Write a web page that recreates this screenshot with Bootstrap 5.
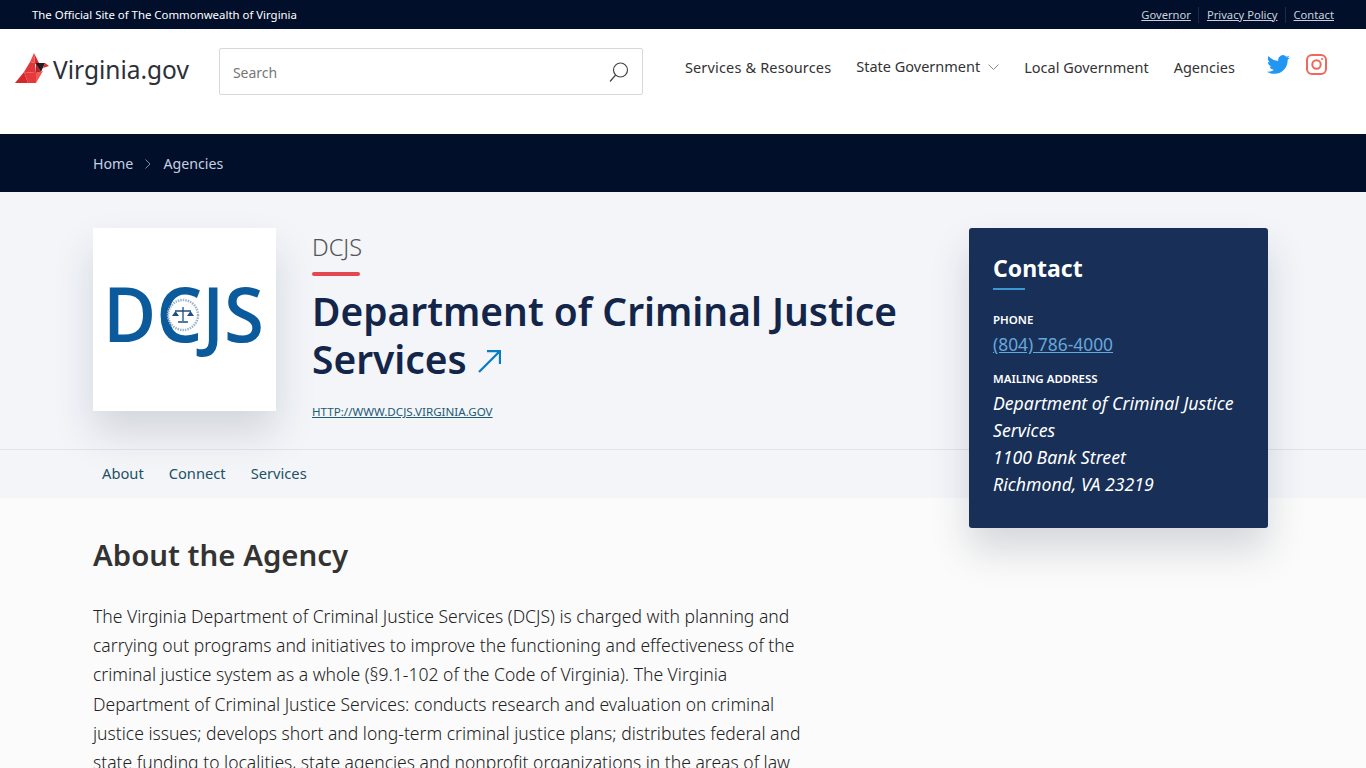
<!DOCTYPE html>
<html lang="en">
<head>
    <meta charset="UTF-8">
    <meta name="viewport" content="width=device-width, initial-scale=1.0">
    <title>Department of Criminal Justice Services</title>
    <link href="https://cdn.jsdelivr.net/npm/bootstrap@5.3.0/dist/css/bootstrap.min.css" rel="stylesheet">
    <style>
        body { font-family: "Noto Sans", "Open Sans", sans-serif; background: #fbfbfb; color: #333; overflow-x: hidden; }
        a { color: inherit; }

        /* top strip */
        .gov-strip { height: 29px; background: #020f2a; color: #fff; font-size: 11.4px; padding: 0 32px; }
        .gov-strip a { color: #c9d2de; }
        .gov-links { padding-top: 1px; }
        .gov-links > a { font-size: 11.2px; text-decoration: underline; }
        .gov-links > a + a { border-left: 1px solid #1d2a44; margin-left: 7px; padding-left: 8px; }

        /* header */
        .site-head { height: 105px; background: #fff; padding: 19px 32px 0 14px; }
        .brand-mark { width: 36px; height: 32px; margin-top: -2px; }
        .brand-name { font-size: 24.5px; line-height: 32px; color: #2c3038; margin-left: 3px; padding-top: 2px; }
        .search-box { width: 424px; height: 47px; margin-left: 30px; border: 1px solid #d8d8d8; border-radius: 2px; padding: 0 12px 0 13px; }
        .search-box input { border: 0; outline: 0; flex: 1; font-size: 14px; color: #555; padding: 2px 0 0; background: none; }
        .search-box input::placeholder { color: #777; }
        .main-links { margin-left: 42px; font-size: 14.5px; color: #333; margin-top: 9px; }
        .main-links a { text-decoration: none; margin-right: 25px; }
        .main-links .wide-link { letter-spacing: .16px; }
        .main-links .raised-link { margin-top: -2px; }
        .social-links { margin-left: 7px; gap: 16px; margin-top: 5px; }

        /* breadcrumb */
        .crumb-bar { height: 58px; background: #020f2a; padding: 2px 0 0 93px; font-size: 14.2px; color: #c5d0e2; }
        .crumb-bar a { text-decoration: none; }
        .crumb-bar .crumb-sep { width: 30px; }

        /* hero */
        .agency-hero { height: 258px; background: #f3f5f9; border-bottom: 1px solid #e2e4e8; padding: 36px 0 0 93px; }
        .agency-logo { width: 183px; height: 183px; background: #fff; box-shadow: 0 22px 38px rgba(30,40,60,.15); flex-shrink: 0; }
        .agency-info { margin-left: 36px; width: 620px; }
        .agency-abbr { font-size: 23.5px; font-weight: 300; line-height: 30px; color: #555; margin: 4px 0 0; }
        .red-rule { width: 48px; height: 4px; background: #e3474f; border-radius: 2px; margin: 10px 0 11px; }
        .agency-title { font-size: 38.9px; line-height: 48px; font-weight: 600; color: #13264a; margin: 0; }
        .agency-title svg { vertical-align: 1px; margin-left: 1px; }
        .agency-url { display: block; margin-top: 20px; font-size: 11.6px; color: #1d5a73; }

        /* section tabs */
        .section-tabs { height: 48px; background: #f3f5f9; padding: 0 0 2px 102px; gap: 25px; font-size: 14.7px; color: #235165; }
        .section-tabs a { text-decoration: none; }

        /* contact card */
        .page-wrap { position: relative; }
        .contact-panel { position: absolute; left: 969px; top: 228px; width: 299px; height: 300px; padding: 24px; background: #182f57; color: #fff; border-radius: 3px; box-shadow: 0 22px 38px rgba(30,40,60,.17); }
        .contact-panel h2 { font-size: 23px; font-weight: 700; line-height: 34px; margin: -1px 0 1px; }
        .blue-rule { width: 32px; height: 2px; background: #3c97d3; margin: 3px 0 22px; }
        .contact-label { font-size: 11.5px; font-weight: 600; text-transform: uppercase; line-height: 16px; margin-bottom: 3px; }
        .contact-phone { font-size: 17.4px; line-height: 27px; color: #66a8dc; display: block; margin-bottom: 13px; }
        .contact-panel address { font-size: 17.7px; line-height: 27px; font-style: italic; margin: 0; }

        /* about */
        .about-text { padding: 37px 0 0 93px; width: 830px; }
        .about-text h2 { font-size: 29.4px; font-weight: 600; line-height: 40px; color: #333; margin: 0 0 27px; }
        .about-text p { font-size: 17.55px; font-weight: 300; line-height: 29.2px; color: #222; margin: 0; white-space: nowrap; }
    </style>
</head>
<body>
<div class="page-wrap">
    <!-- top strip -->
    <div class="gov-strip d-flex justify-content-between align-items-center">
        <span>The Official Site of The Commonwealth of Virginia</span>
        <span class="gov-links d-flex"><a href="#">Governor</a><a href="#">Privacy Policy</a><a href="#">Contact</a></span>
    </div>

    <!-- header -->
    <header class="site-head d-flex align-items-start">
        <a href="#" class="d-flex align-items-center text-decoration-none mt-1">
            <svg class="brand-mark" viewBox="14 52 36 32">
                <polygon points="34,53 39,63 35,63" fill="#d9272e"/>
                <polygon points="34,53 35,63 30,62" fill="#ee4b47"/>
                <polygon points="30,62 35,63 36,73 24,72" fill="#e0353a"/>
                <polygon points="35,63 45,63 41,72" fill="#231f20"/>
                <polygon points="45,63 49,66 43,68" fill="#d92f33"/>
                <polygon points="36,64 41,72 36,73" fill="#b92328"/>
                <polygon points="36,73 43,71 36,83" fill="#f05a52"/>
                <polygon points="24,72 36,73 36,83 28,83" fill="#e5393c"/>
                <polygon points="24,72 28,83 15,83" fill="#d4282d"/>
            </svg>
            <span class="brand-name">Virginia.gov</span>
        </a>
        <form class="search-box d-flex align-items-center">
            <input type="text" placeholder="Search">
            <svg width="22" height="22" viewBox="0 0 22 22" fill="none" stroke="#444" stroke-width="1.2"><circle cx="12.500" cy="9" r="7"/><path d="M7.600 14 2 20.500"/></svg>
        </form>
        <nav class="main-links d-flex align-items-center">
            <a href="#" class="wide-link">Services &amp; Resources</a>
            <a href="#" class="raised-link d-flex align-items-center gap-2">State Government
                <svg width="11" height="6" viewBox="0 0 11 6" fill="none" stroke="#888"><path d="M.5.5l5 5 5-5"/></svg></a>
            <a href="#">Local Government</a>
            <a href="#">Agencies</a>
        </nav>
        <div class="social-links d-flex align-items-center">
            <svg width="23" height="23" viewBox="0 0 24 24" fill="#2196f3"><path d="M23.953 4.57a10 10 0 01-2.825.775 4.958 4.958 0 002.163-2.723c-.951.555-2.005.959-3.127 1.184a4.92 4.92 0 00-8.384 4.482C7.69 8.095 4.067 6.13 1.64 3.162a4.822 4.822 0 00-.666 2.475c0 1.71.87 3.213 2.188 4.096a4.904 4.904 0 01-2.228-.616v.06a4.923 4.923 0 003.946 4.827 4.996 4.996 0 01-2.212.085 4.936 4.936 0 004.604 3.417 9.867 9.867 0 01-6.102 2.105c-.39 0-.779-.023-1.17-.067a13.995 13.995 0 007.557 2.209c9.053 0 13.998-7.496 13.998-13.985 0-.21 0-.42-.015-.63A9.935 9.935 0 0024 4.59z"/></svg>
            <svg width="21" height="21" viewBox="0 0 21 21" fill="none" stroke="#f0675c" stroke-width="2"><rect x="1" y="1" width="19" height="19" rx="5"/><circle cx="10.500" cy="10.500" r="4.200"/><circle cx="16" cy="5" r="1" fill="#f0675c" stroke="none"/></svg>
        </div>
    </header>

    <!-- breadcrumb -->
    <div class="crumb-bar d-flex align-items-center">
        <a href="#">Home</a>
        <span class="crumb-sep d-flex justify-content-center"><svg width="6" height="10" viewBox="0 0 6 10" fill="none" stroke="#7f8ca3"><path d="M.5.5 5 5 .5 9.500"/></svg></span>
        <a href="#">Agencies</a>
    </div>

    <!-- hero -->
    <section class="agency-hero d-flex align-items-start">
        <div class="agency-logo">
            <svg width="183" height="183" viewBox="0 0 183 183">
                <text x="10" y="114" textLength="161" lengthAdjust="spacingAndGlyphs" fill="#0b5a9c" font-family="'Open Sans', sans-serif" font-weight="600" font-size="76">DCJS</text>
                <circle cx="90" cy="87" r="15" fill="#fff" stroke="#9db4cb" stroke-width="2.500" stroke-dasharray="1.500 1"/>
                <path d="M82 83h16M90 79v14M85 94h10" stroke="#1d4f7f" stroke-width="1.300" fill="none"/>
                <path d="M79 88h7l-3.500-5zM94 88h7l-3.500-5z" fill="#1d4f7f"/>
            </svg>
        </div>
        <div class="agency-info">
            <p class="agency-abbr">DCJS</p>
            <div class="red-rule"></div>
            <h1 class="agency-title">Department of Criminal Justice Services
                <svg width="23" height="23" viewBox="0 0 23 23" fill="none" stroke="#0a7dc0" stroke-width="2.300"><path d="M1 22 22 1M9 1h13v13"/></svg>
            </h1>
            <a class="agency-url" href="#">HTTP://WWW.DCJS.VIRGINIA.GOV</a>
        </div>
    </section>

    <!-- section tabs -->
    <nav class="section-tabs d-flex align-items-center">
        <a href="#">About</a>
        <a href="#">Connect</a>
        <a href="#">Services</a>
    </nav>

    <!-- contact card -->
    <aside class="contact-panel">
        <h2>Contact</h2>
        <div class="blue-rule"></div>
        <div class="contact-label">Phone</div>
        <a class="contact-phone" href="#">(804) 786-4000</a>
        <div class="contact-label">Mailing Address</div>
        <address>Department of Criminal Justice Services<br>1100 Bank Street<br>Richmond, VA 23219</address>
    </aside>

    <!-- about -->
    <main class="about-text">
        <h2>About the Agency</h2>
        <p>The Virginia Department of Criminal Justice Services (DCJS) is charged with planning and<br>
        carrying out programs and initiatives to improve the functioning and effectiveness of the<br>
        criminal justice system as a whole (§9.1-102 of the Code of Virginia). The Virginia<br>
        Department of Criminal Justice Services: conducts research and evaluation on criminal<br>
        justice issues; develops short and long-term criminal justice plans; distributes federal and<br>
        state funding to localities, state agencies and nonprofit organizations in the areas of law</p>
    </main>
</div>
</body>
</html>
